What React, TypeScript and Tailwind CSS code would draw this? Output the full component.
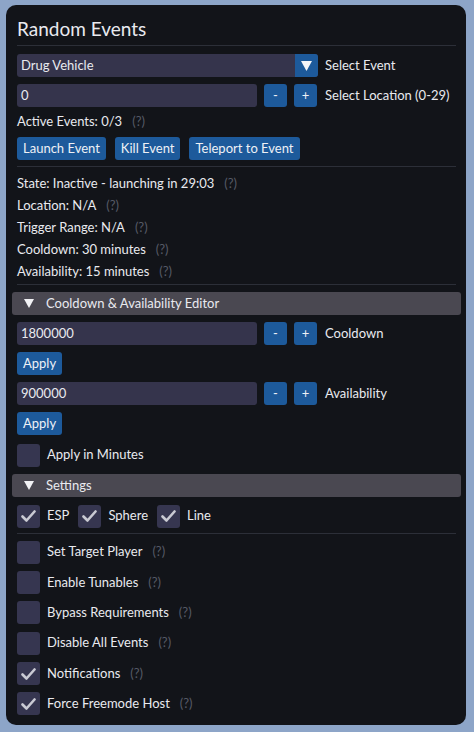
import React from 'react';

const font = { fontFamily: 'Lato, "Noto Sans", sans-serif' };

const Help = () => <span className="ml-[10px] text-[#565a66]">(?)</span>;

const BlueButton = ({ children, className = '' }: { children: React.ReactNode; className?: string }) => (
  <button className={`h-[23px] px-[6px] rounded-[3px] bg-[#1d5a9b] text-[#eef1f6] text-[13px] leading-none ${className}`}>
    {children}
  </button>
);

const Separator = ({ className = '' }: { className?: string }) => (
  <div className={`h-px bg-[#2c2f38] ${className}`} />
);

const Check = ({ checked }: { checked?: boolean }) => (
  <div className="w-[23px] h-[23px] rounded-[3px] bg-[#363650] flex items-center justify-center shrink-0">
    {checked && (
      <svg width="15" height="12" viewBox="0 0 15 12">
        <path d="M1.5 6.5 L5.5 10.5 L13.5 1.5" fill="none" stroke="#c9cad3" strokeWidth="2.6" strokeLinecap="round" strokeLinejoin="round" />
      </svg>
    )}
  </div>
);

const StepRow = ({ value, label, className = '' }: { value: string; label: string; className?: string }) => (
  <div className={`flex items-center h-[23px] ${className}`}>
    <div className="w-[240px] h-full rounded-[3px] bg-[#35344c] px-[4px] flex items-center text-[13px]">{value}</div>
    <BlueButton className="ml-[7px] w-[23px] px-0">-</BlueButton>
    <BlueButton className="ml-[7px] w-[23px] px-0">+</BlueButton>
    <span className="ml-[8px] text-[13px]">{label}</span>
  </div>
);

const Header = ({ title, className = '' }: { title: string; className?: string }) => (
  <div className={`-mx-[5px] h-[23px] rounded-[3px] bg-[#4a4851] flex items-center pl-[12px] text-[13px] ${className}`}>
    <svg width="10" height="9" viewBox="0 0 10 9" className="mr-[12px]">
      <path d="M0 0 H10 L5 9 Z" fill="#f2f2f5" />
    </svg>
    {title}
  </div>
);

const CheckRow = ({ label, checked, help = true, className = '' }: { label: string; checked?: boolean; help?: boolean; className?: string }) => (
  <div className={`flex items-center h-[24px] text-[13px] ${className}`}>
    <Check checked={checked} />
    <span className="ml-[7px]">{label}</span>
    {help && <Help />}
  </div>
);

export default function App() {
  return (
    <div className="w-[474px] h-[732px] bg-[#8da5c8] pt-[5px] pl-[6px]" style={font}>
      <div className="w-[460px] h-[720px] rounded-[10px] bg-[#121419] text-[#e9eaef] pt-[12px] pl-[11px] pr-[10px] flex flex-col">
        <div className="h-[24px] text-[19px] leading-[24px]">Random Events</div>
        <Separator className="mt-[4px]" />

        <div className="mt-[8px] flex items-center h-[23px]">
          <div className="w-[301px] h-full rounded-[3px] bg-[#35344c] flex items-center">
            <span className="flex-1 px-[4px] text-[13px]">Drug Vehicle</span>
            <div className="w-[23px] h-full rounded-r-[3px] bg-[#1d5a9b] flex items-center justify-center">
              <svg width="11" height="10" viewBox="0 0 11 10">
                <path d="M0 0 H11 L5.5 10 Z" fill="#f4f5f8" />
              </svg>
            </div>
          </div>
          <span className="ml-[7px] text-[13px]">Select Event</span>
        </div>

        <StepRow value="0" label="Select Location (0-29)" className="mt-[7px]" />

        <div className="mt-[6px] h-[16px] leading-[16px] text-[13px]">
          Active Events: 0/3
          <Help />
        </div>

        <div className="mt-[8px] flex gap-[9px]">
          <BlueButton>Launch Event</BlueButton>
          <BlueButton>Kill Event</BlueButton>
          <BlueButton>Teleport to Event</BlueButton>
        </div>

        <Separator className="mt-[6px]" />

        <div className="mt-[8px] flex flex-col gap-[6px] text-[13px] leading-[16px]">
          <div>State: Inactive - launching in 29:03<Help /></div>
          <div>Location: N/A<Help /></div>
          <div>Trigger Range: N/A<Help /></div>
          <div>Cooldown: 30 minutes<Help /></div>
          <div>Availability: 15 minutes<Help /></div>
        </div>

        <Separator className="mt-[5px]" />

        <Header title="Cooldown & Availability Editor" className="mt-[7px]" />

        <StepRow value="1800000" label="Cooldown" className="mt-[7px]" />
        <div className="mt-[7px] flex">
          <BlueButton>Apply</BlueButton>
        </div>
        <StepRow value="900000" label="Availability" className="mt-[7px]" />
        <div className="mt-[7px] flex">
          <BlueButton>Apply</BlueButton>
        </div>
        <CheckRow label="Apply in Minutes" help={false} className="mt-[8px]" />

        <Header title="Settings" className="mt-[7px]" />

        <div className="mt-[7px] flex items-center h-[24px] text-[13px]">
          <Check checked />
          <span className="ml-[7px]">ESP</span>
          <div className="ml-[9px]"><Check checked /></div>
          <span className="ml-[7px]">Sphere</span>
          <div className="ml-[9px]"><Check checked /></div>
          <span className="ml-[7px]">Line</span>
        </div>

        <Separator className="mt-[5px]" />

        <div className="mt-[6px] flex flex-col gap-[6.4px]">
          <CheckRow label="Set Target Player" />
          <CheckRow label="Enable Tunables" />
          <CheckRow label="Bypass Requirements" />
          <CheckRow label="Disable All Events" />
          <CheckRow label="Notifications" checked />
          <CheckRow label="Force Freemode Host" checked />
        </div>
      </div>
    </div>
  );
}
